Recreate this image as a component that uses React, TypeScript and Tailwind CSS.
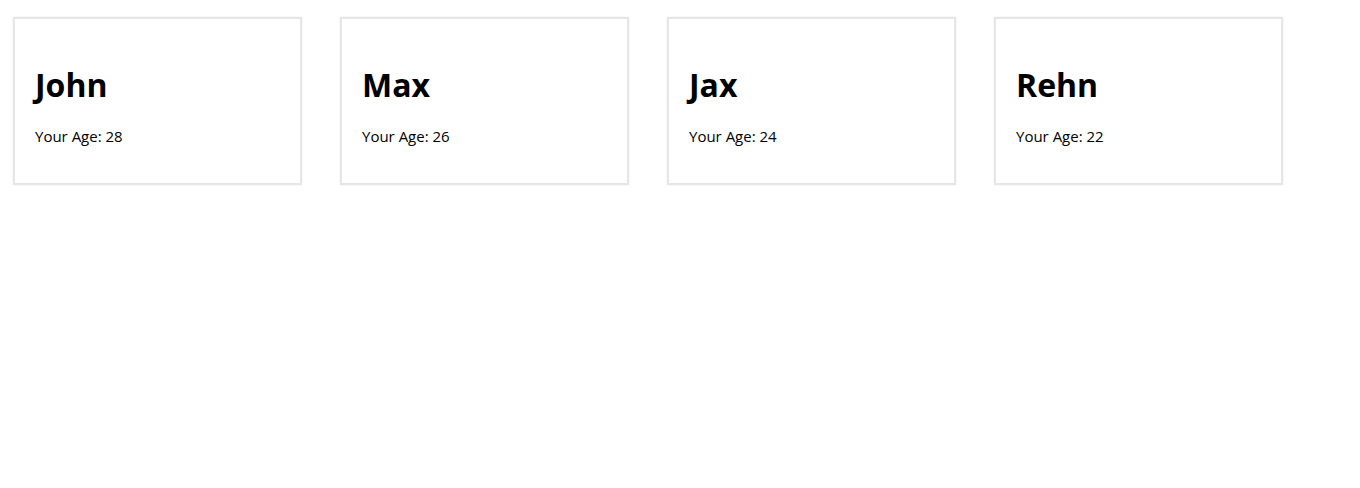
const people = [
  { name: "John", age: 28 },
  { name: "Max", age: 26 },
  { name: "Jax", age: 24 },
  { name: "Rehn", age: 22 },
];

const Card = ({ name, age }: { name: string; age: number }) => (
  <div className="w-[289px] h-[168px] border-2 border-[#e6e6e6] bg-white px-5 pt-[46px] shadow-[0_0_2px_rgba(0,0,0,0.08)]">
    <h1 className="text-[32px] font-bold leading-[40px] text-black">{name}</h1>
    <p className="mt-[21px] text-[15px] leading-[20px] text-black">
      Your Age: {age}
    </p>
  </div>
);

export default function App() {
  return (
    <div className="min-h-[488px] bg-white font-['Open_Sans',sans-serif]">
      <div className="flex gap-[38px] pl-[13px] pt-[17px]">
        {people.map((p) => (
          <Card key={p.name} name={p.name} age={p.age} />
        ))}
      </div>
    </div>
  );
}
